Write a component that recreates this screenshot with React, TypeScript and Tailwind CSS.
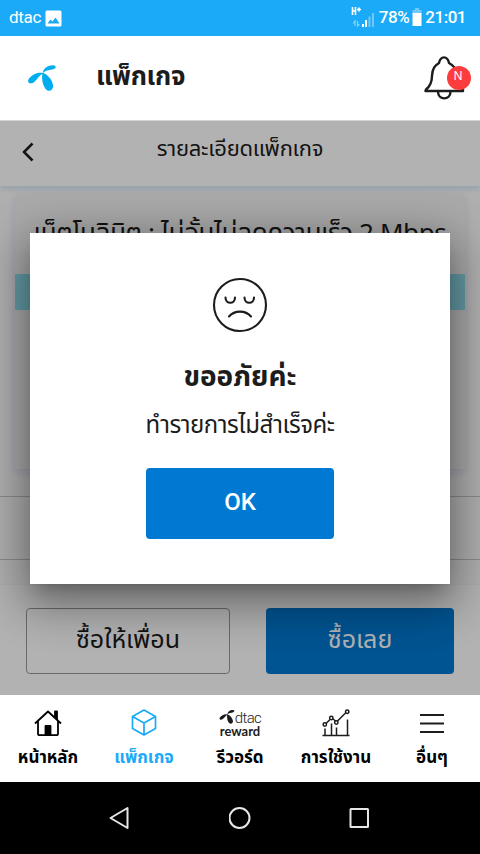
import React from 'react';

interface NavItemProps {
  label: string;
  labelClass?: string;
  children: React.ReactNode;
}

const NavItem: React.FC<NavItemProps> = ({ label, labelClass = '', children }) => (
  <button className="flex w-24 flex-col items-center pt-3">
    <span className="flex h-8 items-center justify-center">{children}</span>
    <span className={`mt-[7px] text-[17px] leading-6 font-bold whitespace-nowrap ${labelClass}`}>{label}</span>
  </button>
);

const StatusBar: React.FC = () => (
  <div className="flex h-9 shrink-0 items-center justify-between bg-[#1baaf8] pr-3.5 pl-[9px] font-[Roboto,sans-serif] text-white">
    <div className="flex items-center gap-1">
      <span className="text-[17px] tracking-[-0.3px]">dtac</span>
      <svg width="17" height="17" viewBox="0 0 17 17">
        <rect x="0.5" y="0.5" width="16" height="16" rx="1.5" fill="white" />
        <path d="M2.5 13.5 5.5 9.5l2 2 3-4 4 6Z" fill="#1baaf8" />
      </svg>
    </div>
    <div className="flex items-center">
      {/* Mobile data and signal strength */}
      <svg width="24" height="22" viewBox="0 0 24 22" className="mr-1 mb-0.5">
        <path d="M1.5 1v8M4.5 1v8M1.5 5h3" stroke="white" strokeWidth="1.6" />
        <path d="M8 1.5v4M6 3.5h4" stroke="white" strokeWidth="1.6" />
        <path d="M4 20v-5L2 17.5M6.5 15v5l2-2" stroke="#8bd2fa" strokeWidth="1.2" fill="none" />
        <path d="M11 18h2v3h-2ZM14 14h2v7h-2Z" fill="white" />
        <path d="M17.5 10.5h2V21h-2ZM21 7h2v14h-2Z" fill="#72c8fa" />
      </svg>
      <span className="text-[17px] font-medium tracking-[-0.4px]">78%</span>
      <svg width="10" height="18" viewBox="0 0 10 18" className="mr-[3px] mb-0.5 ml-[3px]">
        <path d="M3 0h4v2h2.5v4H0.5V2H3Z" fill="#72c8fa" />
        <rect x="0.5" y="5" width="9" height="13" fill="white" />
      </svg>
      <span className="text-[17px] font-medium tracking-[-0.5px]">21:01</span>
    </div>
  </div>
);

const PropellerLogo: React.FC<{ className?: string; fill?: string }> = ({ className, fill = '#00adef' }) => (
  <svg viewBox="0 0 28 26" className={className} fill={fill}>
    <path d="M14.8 8.5C14.8 4 19 .2 24.8.2c3.6 0 3.9 3 .9 3.9-3.7 1.3-8.7.9-10.900 4.400Z" />
    <path d="M15.500 8.200C10 6.500 4 9.500.7 14c-2 3.500 1.600 5.600 4.900 3.400 3.600-2.700 5-6.700 9.900-9.200Z" />
    <path d="M14.600 7.800c5 1.700 9.500 6.700 10.400 12.200.7 5.700-4.500 7.500-7.500 3.700-3.300-4.400-4-10.800-2.900-15.900Z" />
  </svg>
);

const Header: React.FC = () => (
  <header className="flex h-[85px] shrink-0 items-center border-b border-[#d6d6d6] bg-white pr-[9px] pl-7">
    <PropellerLogo className="h-[26px] w-7" />
    <h1 className="mb-0.5 ml-10 text-[26px] leading-9 font-bold tracking-[-0.3px] text-[#1c1c1c]">แพ็กเกจ</h1>
    <div className="relative ml-auto h-11 w-[47px]">
      <svg width="41" height="44" viewBox="0 0 41 44" fill="none" stroke="#1c1c1c" strokeWidth="2.4" strokeLinejoin="round">
        <path d="M2 33.5c4-3 6-7 6-13.700C8.5 12 11 9.500 15 7c.8-3.800 2.500-5.600 5-5.600s4.200 1.800 5 5.600C29.500 9.500 32 12 32.500 19.800c0 6.700 2 10.700 6.500 13.700v1.500H1.500Z" />
        <path d="M14 35.500c0 9.200 12.500 9.200 12.500 0" />
      </svg>
      <span className="absolute top-[10px] right-0 flex h-6 w-6 justify-center rounded-full bg-[#fd3d3d] pt-0.5 pr-0.5 font-['Noto_Sans',sans-serif] text-xs leading-4 text-white">
        N
      </span>
    </div>
  </header>
);

const PackageDetail: React.FC = () => (
  <div className="flex h-full flex-col bg-[#fdfdfd]">
    <div className="flex h-[65px] shrink-0 items-start bg-white pt-[9px] pl-[21px] text-[#1c1c1c] shadow-[0_3px_6px_rgba(150,200,235,0.4)]">
      <svg width="14" height="20" viewBox="0 0 14 20" className="mt-3" fill="none" stroke="currentColor" strokeWidth="2.5">
        <path d="M11.5 1.5 3 10l8.5 8.5" />
      </svg>
      <h2 className="w-[410px] text-center text-[22px] leading-10 tracking-[-0.25px] whitespace-nowrap">รายละเอียดแพ็กเกจ</h2>
    </div>
    <div className="mx-[15px] mt-1.5 h-[277px] shrink-0 rounded-t-md bg-[#f5f5f5] shadow-[0_4px_8px_rgba(205,210,240,0.6)]">
      <div className="flex h-[82px] justify-center pt-[22px] text-[26px] leading-10 tracking-[-0.39px] whitespace-nowrap text-[#1c1c1c]">
        เน็ตโนลิมิต : ไม่อั้นไม่ลดความเร็ว 2 Mbps
      </div>
      <div className="h-9 bg-[#91e1ef]" />
    </div>
    <div className="mt-[27px] h-16 shrink-0 border-y border-[#c8c8c8]" />
    <div className="mt-[25px] flex flex-1 justify-between bg-white px-[26px] pt-[23px] shadow-[0_-1px_2px_rgba(0,0,0,0.03)]">
      <button className="h-[66px] w-[204px] rounded border border-[#999] text-[25px] text-[#1c1c1c]">ซื้อให้เพื่อน</button>
      <button className="h-[66px] w-[188px] rounded bg-[#0079d2] text-[25px] text-white">ซื้อเลย</button>
    </div>
  </div>
);

const ErrorDialog: React.FC = () => (
  <div className="absolute inset-0 flex items-start overflow-hidden bg-black/30 px-[30px] pt-28">
    <div
      role="dialog"
      className="flex h-[351px] w-full flex-col items-center bg-white pt-11 text-[#1c1c1c] shadow-[0_11px_15px_-7px_rgba(0,0,0,0.2),0_24px_38px_3px_rgba(0,0,0,0.14),0_9px_46px_8px_rgba(0,0,0,0.3)]"
    >
      <svg width="56" height="56" viewBox="0 0 56 56" fill="none" stroke="currentColor" strokeWidth="2.1" strokeLinecap="round">
        <circle cx="28" cy="28" r="26" />
        <path d="M13.5 20.5c0 7 9.5 7 9.5 0M32.500 20.500c0 7 9.500 7 9.500 0M17 39.500c5.500-6.500 16.500-6.500 22 0" />
      </svg>
      <h3 className="mt-[25px] text-[28px] leading-10 font-bold whitespace-nowrap">ขออภัยค่ะ</h3>
      <p className="mt-2 text-[24px] leading-10 tracking-[-0.45px] whitespace-nowrap">ทำรายการไม่สำเร็จค่ะ</p>
      <button className="mt-[22px] h-[71px] w-[188px] rounded bg-[#0079d2] pb-1 font-[Roboto,sans-serif] text-[24px] font-medium text-white">
        OK
      </button>
    </div>
  </div>
);

const BottomNav: React.FC = () => (
  <nav className="flex h-[87px] shrink-0 bg-white text-black">
    <NavItem label="หน้าหลัก">
      <svg width="30" height="28" viewBox="0 0 30 28" fill="none" stroke="currentColor" strokeWidth="1.8" strokeLinejoin="round">
        <path d="M2 14.5 15 2.5l13 12M5 12v12.5c0 1 .7 1.700 1.700 1.700h16.600c1 0 1.700-.7 1.700-1.700V12" />
        <path d="M22 9V2.500h2V11" fill="currentColor" />
        <path d="M12.500 17h5v9h-5Z" fill="currentColor" />
      </svg>
    </NavItem>
    <NavItem label="แพ็กเกจ" labelClass="text-[#1baaf8]">
      <svg width="26" height="28" viewBox="0 0 26 28" className="-mt-0.5" fill="none" stroke="#1baaf8" strokeWidth="1.7" strokeLinejoin="round">
        <path d="M13 2 24.5 8.500v12L13 27 1.500 20.500v-12ZM1.500 8.500 13 15l11.500-6.500M13 15v12" />
      </svg>
    </NavItem>
    <NavItem label="รีวอร์ด">
      <span className="flex flex-col text-[#1c1c1c]">
        <span className="flex h-4 items-start">
          <PropellerLogo className="h-[14px] w-4" fill="#1c1c1c" />
          <span className="font-[Roboto,sans-serif] text-[15px] leading-4 font-light tracking-[-0.6px]">dtac</span>
        </span>
        <span className="font-[Lato,sans-serif] text-[13px] leading-[10px] font-bold">reward</span>
      </span>
    </NavItem>
    <NavItem label="การใช้งาน">
      <svg width="28" height="28" viewBox="0 0 28 28" fill="none" stroke="#1c1c1c" strokeWidth="1.5">
        <path d="M.5 26.500h27M3 27v-7.500M9.500 27V14.500M14.500 27v-8.500M25.500 27V10.500M4 14.500l4-4M10.500 9.500l3 2.500M15.500 12 24 3.500" />
        <circle cx="2.8" cy="15.5" r="1.7" />
        <circle cx="9.3" cy="9" r="1.7" />
        <circle cx="14.3" cy="13.5" r="1.7" />
        <circle cx="25.2" cy="2.7" r="1.7" />
      </svg>
    </NavItem>
    <NavItem label="อื่นๆ">
      <svg width="24" height="20" viewBox="0 0 24 20" stroke="#1c1c1c" strokeWidth="2">
        <path d="M0 2h24M0 10.500h24M0 19h24" />
      </svg>
    </NavItem>
  </nav>
);

const SystemBar: React.FC = () => (
  <div className="flex h-[72px] shrink-0 items-center justify-center gap-[98px] bg-black">
    <svg width="22" height="24" viewBox="0 0 22 24" fill="none" stroke="#e6e6e6" strokeWidth="2" strokeLinejoin="round">
      <path d="M1.5 12 18.500 2v20Z" />
    </svg>
    <svg width="22" height="24" viewBox="0 0 22 24" fill="none" stroke="#e6e6e6" strokeWidth="2">
      <circle cx="10.5" cy="12" r="10" />
    </svg>
    <svg width="22" height="24" viewBox="0 0 22 24" fill="none" stroke="#e6e6e6" strokeWidth="2">
      <rect x="1.5" y="3" width="17.5" height="18" rx="0.5" />
    </svg>
  </div>
);

export default function App() {
  return (
    <div className="flex h-[854px] w-[480px] flex-col overflow-hidden bg-white font-['Noto_Sans_Thai','Noto_Sans',sans-serif]">
      <StatusBar />
      <Header />
      <main className="relative h-[574px] shrink-0">
        <PackageDetail />
        <ErrorDialog />
      </main>
      <BottomNav />
      <SystemBar />
    </div>
  );
}
